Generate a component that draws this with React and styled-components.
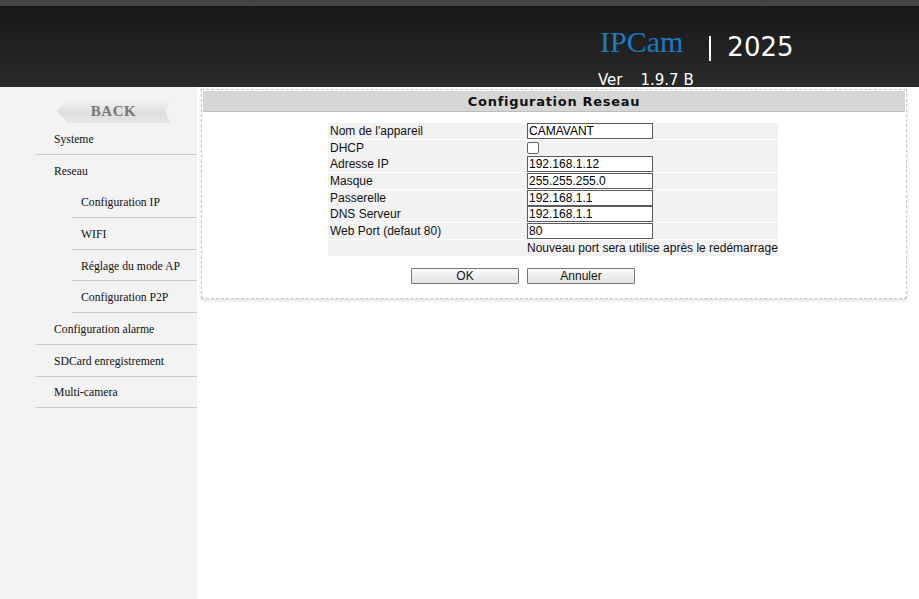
import React from 'react';
import styled, { createGlobalStyle } from 'styled-components';

const Global = createGlobalStyle`
  html, body { margin: 0; padding: 0; background: #fff; }
  body { width: 919px; height: 599px; overflow: hidden; }
`;

const Page = styled.div`
  display: flex;
  flex-direction: column;
  height: 599px;
`;

const Header = styled.header`
  height: 87px;
  flex: none;
  border-top: 6px solid #444;
  box-sizing: border-box;
  background: linear-gradient(#181818, #2a2a2a);
  padding-left: 598px;
  color: #fff;
`;

const BrandRow = styled.div`
  height: 54px;
  padding-top: 24px;
  box-sizing: border-box;
  white-space: nowrap;
  line-height: 24px;
`;

const Brand = styled.span`
  font-family: "Liberation Serif", serif;
  font-size: 30px;
  color: #1b7cc4;
  padding-left: 2px;
`;

const Year = styled.span`
  font-family: "DejaVu Sans", sans-serif;
  font-size: 26px;
  margin-left: 26px;
  vertical-align: -4px;
`;

const Bar = styled.span`
  display: inline-block;
  width: 2px;
  height: 25px;
  background: #fff;
  margin-right: 16px;
  vertical-align: -5px;
`;

const Version = styled.div`
  display: flex;
  gap: 18px;
  font-family: "DejaVu Sans", sans-serif;
  font-size: 15px;
  margin-top: 12px;
  line-height: 17px;
`;

const Body = styled.div`
  display: flex;
  flex: 1;
`;

const Sidebar = styled.nav`
  width: 197px;
  flex: none;
  background: #f3f3f3;
  padding-top: 12px;
`;

const Back = styled.div`
  margin-left: 57px;
  width: 113px;
  height: 24px;
  background: linear-gradient(#f4f4f4, #dedede 60%, #e6e6e6);
  clip-path: polygon(0 50%, 11px 0, 100% 0, 96% 50%, 100% 100%, 11px 100%);
  display: flex;
  align-items: center;
  justify-content: center;
  font-family: "Liberation Serif", serif;
  font-weight: bold;
  font-size: 15px;
  color: #777;
  letter-spacing: 0.5px;
`;

const Menu = styled.ul`
  list-style: none;
  margin: 0 0 0 36px;
  padding: 0;
`;

const Item = styled.li`
  height: 28.7px;
  padding-top: 2px;
  display: flex;
  align-items: center;
  margin-left: ${({ sub }) => (sub ? '36px' : '0')};
  padding-left: ${({ sub }) => (sub ? '9px' : '18px')};
  border-bottom: ${({ noLine }) => (noLine ? '1px solid transparent' : '1px solid #cbcbcb')};
  font-family: "Liberation Serif", serif;
  font-size: 11.7px;
  color: #111;
`;

const Main = styled.main`
  flex: 1;
  padding: 2px 12px 0 4px;
`;

const Panel = styled.section`
  border: 1px dashed #c6c6c6;
  box-shadow: 0 2px 3px rgba(0, 0, 0, 0.12);
  padding: 1px 1px 14px;
`;

const PanelTitle = styled.h2`
  margin: 0;
  height: 20px;
  background: #d6d6d6;
  border-bottom: 1px solid #bdbdbd;
  display: flex;
  align-items: center;
  justify-content: center;
  font-family: "DejaVu Sans", sans-serif;
  font-weight: bold;
  font-size: 13px;
  letter-spacing: 0.7px;
  color: #111;
`;

const Grid = styled.div`
  margin: ${({ top }) => top} 0 0 125px;
  width: 450px;
  display: grid;
  grid-template-columns: 198px 1fr;
  row-gap: 0.7px;
`;

const Label = styled.div`
  background: #f2f2f2;
  height: 16px;
  display: flex;
  align-items: center;
  padding-left: ${({ pad }) => pad || '2px'};
  font-family: "Liberation Sans", Arial, sans-serif;
  font-size: 12px;
  color: #111;
`;

const Field = styled.input`
  width: 126px;
  height: 16px;
  box-sizing: border-box;
  border: 1px solid #5a5a5a;
  padding: 0 1px;
  margin: 0;
  font-family: "Liberation Sans", Arial, sans-serif;
  font-size: 12px;
  color: #000;
  background: #fff;
  outline: none;
`;

const Check = styled.span`
  width: 10px;
  height: 10px;
  border: 1px solid #666;
  border-radius: 2px;
  background: #fff;
`;

const Btn = styled.button`
  width: 108px;
  height: 16px;
  padding: 0;
  border: 1px solid #777;
  border-radius: 1px;
  background: linear-gradient(#fafafa, #e2e2e2);
  font-family: "Liberation Sans", Arial, sans-serif;
  font-size: 12px;
  color: #111;
  justify-self: ${({ right }) => (right ? 'end' : 'start')};
  margin: ${({ right }) => (right ? '0 7px 0 0' : '0 0 0 1px')};
`;

const rows = [
  ['Nom de l\'appareil', 'CAMAVANT'],
  ['DHCP', null],
  ['Adresse IP', '192.168.1.12'],
  ['Masque', '255.255.255.0'],
  ['Passerelle', '192.168.1.1'],
  ['DNS Serveur', '192.168.1.1'],
  ['Web Port (defaut 80)', '80'],
];

const menu = [
  { label: 'Systeme' },
  { label: 'Reseau', noLine: true },
  { label: 'Configuration IP', sub: true },
  { label: 'WIFI', sub: true },
  { label: 'Réglage du mode AP', sub: true },
  { label: 'Configuration P2P', sub: true },
  { label: 'Configuration alarme' },
  { label: 'SDCard enregistrement' },
  { label: 'Multi-camera' },
];

const App = () => (
  <Page>
    <Global />
    <Header>
      <BrandRow>
        <Brand>IPCam</Brand>
        <Year><Bar />2025</Year>
      </BrandRow>
      <Version><span>Ver</span><span>1.9.7 B</span></Version>
    </Header>
    <Body>
      <Sidebar>
        <Back>BACK</Back>
        <Menu>
          {menu.map((m) => (
            <Item key={m.label} sub={m.sub} noLine={m.noLine}>{m.label}</Item>
          ))}
        </Menu>
      </Sidebar>
      <Main>
        <Panel>
          <PanelTitle>Configuration Reseau</PanelTitle>
          <Grid top="11px">
            {rows.map(([label, value]) => (
              <React.Fragment key={label}>
                <Label>{label}</Label>
                <Label pad="1px">
                  {value === null ? <Check /> : <Field defaultValue={value} readOnly />}
                </Label>
              </React.Fragment>
            ))}
            <Label />
            <Label pad="1px">Nouveau port sera utilise après le redémarrage</Label>
          </Grid>
          <Grid top="12px">
            <Btn right>OK</Btn>
            <Btn>Annuler</Btn>
          </Grid>
        </Panel>
      </Main>
    </Body>
  </Page>
);

export default App;
